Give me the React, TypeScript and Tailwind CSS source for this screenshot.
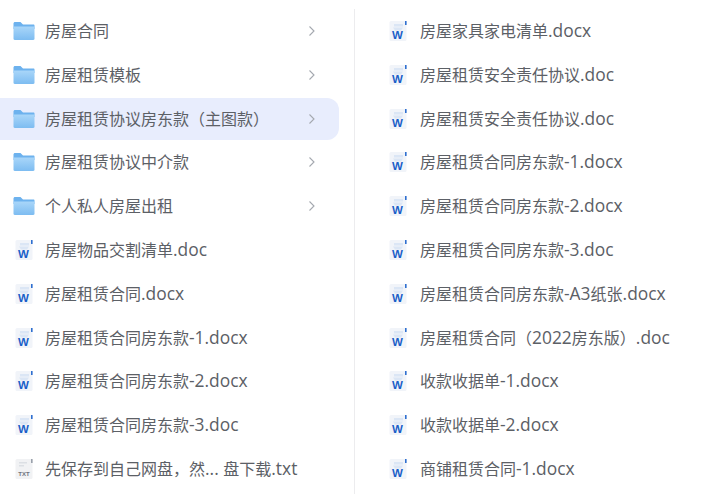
const leftRows = [
  { kind: "folder", name: "房屋合同" },
  { kind: "folder", name: "房屋租赁模板" },
  { kind: "folder", name: "房屋租赁协议房东款（主图款）", active: true },
  { kind: "folder", name: "房屋租赁协议中介款" },
  { kind: "folder", name: "个人私人房屋出租" },
  { kind: "word", name: "房屋物品交割清单.doc" },
  { kind: "word", name: "房屋租赁合同.docx" },
  { kind: "word", name: "房屋租赁合同房东款-1.docx" },
  { kind: "word", name: "房屋租赁合同房东款-2.docx" },
  { kind: "word", name: "房屋租赁合同房东款-3.doc" },
  { kind: "txt", name: "先保存到自己网盘，然... 盘下载.txt" },
];

const rightRows = [
  "房屋家具家电清单.docx",
  "房屋租赁安全责任协议.doc",
  "房屋租赁安全责任协议.doc",
  "房屋租赁合同房东款-1.docx",
  "房屋租赁合同房东款-2.docx",
  "房屋租赁合同房东款-3.doc",
  "房屋租赁合同房东款-A3纸张.docx",
  "房屋租赁合同（2022房东版）.doc",
  "收款收据单-1.docx",
  "收款收据单-2.docx",
  "商铺租赁合同-1.docx",
];

const FolderIcon = () => (
  <svg width="22" height="20" viewBox="0 0 22 20" className="shrink-0">
    <defs>
      <linearGradient id="folderFill" x1="0" y1="0" x2="0" y2="1">
        <stop offset="0" stopColor="#a9d6f9" />
        <stop offset="1" stopColor="#7dbcf1" />
      </linearGradient>
    </defs>
    <path d="M0.5 2.5C0.5 1.7 1.2 1 2 1H7.5L10 3.5H20.5c.6 0 1 .4 1 1V8H0.5z" fill="#6db2ee" />
    <path d="M0.5 5.5h21v12.3c0 .7-.5 1.2-1.2 1.2H1.7C1 19 .5 18.5.5 17.8z" fill="url(#folderFill)" />
  </svg>
);

const WordIcon = () => (
  <svg width="20" height="22" viewBox="0 0 20 22" className="shrink-0">
    <rect x="1.5" y="1" width="17" height="20" rx="1.5" fill="#f1f4f9" />
    <path d="M6 4h9v2.5H6zM5 7.5h10l-2 3H7z" fill="#dbe6f5" />
    <rect x="17" y="1" width="1.6" height="4" fill="#2f6fd0" />
    <text x="9.5" y="18.5" textAnchor="middle" fontSize="11.5" fontWeight="700" fill="#1a5fc8" fontFamily="'Liberation Sans', sans-serif">W</text>
  </svg>
);

const TxtIcon = () => (
  <svg width="20" height="22" viewBox="0 0 20 22" className="shrink-0">
    <rect x="1.5" y="1" width="17" height="20" rx="1.5" fill="#f1f2f4" />
    <path d="M5 4h8v1.5H5zM5 7h5v1.5H5z" fill="#dcdfe4" />
    <rect x="17" y="1" width="1.6" height="4" fill="#9aa1ab" />
    <text x="10" y="17.5" textAnchor="middle" fontSize="6" fontWeight="700" fill="#70757d" fontFamily="'Liberation Sans', sans-serif">TXT</text>
  </svg>
);

const Chevron = () => (
  <svg width="8" height="12" viewBox="0 0 8 12" className="shrink-0">
    <path d="M1.5 1.5l4.5 4.5-4.5 4.5" fill="none" stroke="#a4a8af" strokeWidth="1.1" />
  </svg>
);

// latin runs sit a bit larger than the CJK in the picture
const FileName = ({ name }: { name: string }) => (
  <>
    {name.split(/([\x00-\x7f]+)/).map((part, i) =>
      i % 2 === 1 ? (
        <span key={i} className="text-[17.4px] leading-none">
          {part}
        </span>
      ) : (
        part
      ),
    )}
  </>
);

export default function App() {
  return (
    <div className="flex h-[494px] w-[726px] overflow-hidden bg-white pt-[9.2px] font-['Open_Sans','Noto_Sans_CJK_SC',sans-serif] text-[16px] text-[#5c6066]">
      <div className="w-[355px] shrink-0 border-r border-[#ececee] pr-[15px]">
        {leftRows.map((row, i) => (
          <div key={i} className="h-[43.8px] py-[1px]">
            <div
              className={`flex h-full items-center rounded-r-xl pl-[13px] pr-[23px] ${row.active ? "bg-[#e8edfd]" : ""}`}
            >
              <div className="flex w-[22px] shrink-0 justify-center">
                {row.kind === "folder" && <FolderIcon />}
                {row.kind === "word" && <WordIcon />}
                {row.kind === "txt" && <TxtIcon />}
              </div>
              <span className="ml-[10px] flex-1 whitespace-nowrap">
                <FileName name={row.name} />
              </span>
              {row.kind === "folder" && <Chevron />}
            </div>
          </div>
        ))}
      </div>
      <div className="flex-1 pl-[33px]">
        {rightRows.map((name, i) => (
          <div key={i} className="flex h-[43.8px] items-center">
            <WordIcon />
            <span className="ml-[12px] whitespace-nowrap">
              <FileName name={name} />
            </span>
          </div>
        ))}
      </div>
    </div>
  );
}
